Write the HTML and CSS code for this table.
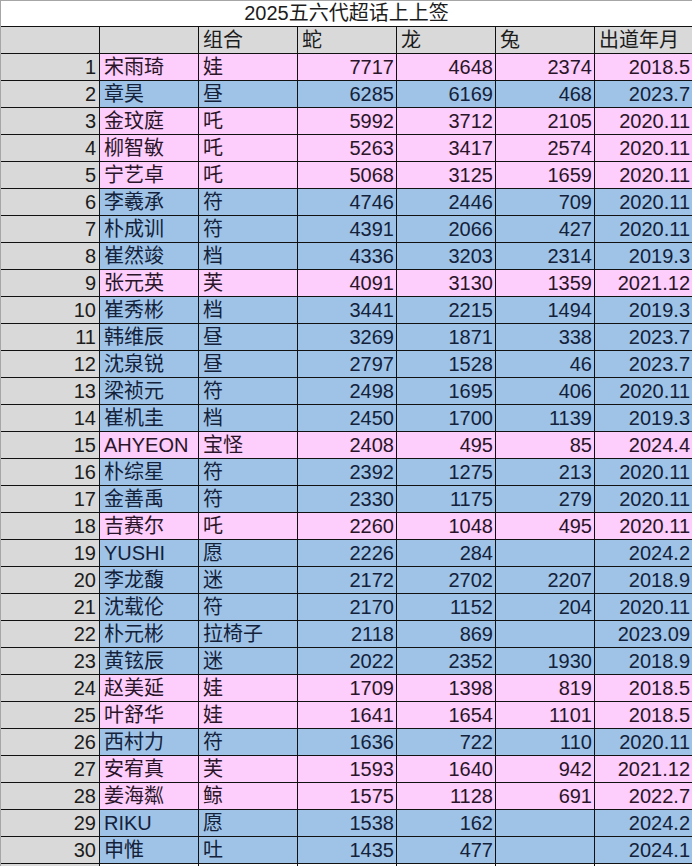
FILE: index.html
```html
<!DOCTYPE html>
<html lang="zh">
<head>
<meta charset="utf-8">
<title>2025五六代超话上上签</title>
<link rel="stylesheet" href="styles.css">
</head>
<body>
<div class="sheet">
  <div class="title">2025五六代超话上上签</div>

  <div class="c idx hd"></div><div class="c hd"></div><div class="c hd">组合</div><div class="c hd">蛇</div><div class="c hd">龙</div><div class="c hd">兔</div><div class="c hd last">出道年月</div>

  <div class="c idx">1</div><div class="c pink">宋雨琦</div><div class="c pink">娃</div><div class="c pink num">7717</div><div class="c pink num">4648</div><div class="c pink num">2374</div><div class="c pink num last">2018.5</div>
  <div class="c idx">2</div><div class="c blue">章昊</div><div class="c blue">昼</div><div class="c blue num">6285</div><div class="c blue num">6169</div><div class="c blue num">468</div><div class="c blue num last">2023.7</div>
  <div class="c idx">3</div><div class="c pink">金玟庭</div><div class="c pink">吒</div><div class="c pink num">5992</div><div class="c pink num">3712</div><div class="c pink num">2105</div><div class="c pink num last">2020.11</div>
  <div class="c idx">4</div><div class="c pink">柳智敏</div><div class="c pink">吒</div><div class="c pink num">5263</div><div class="c pink num">3417</div><div class="c pink num">2574</div><div class="c pink num last">2020.11</div>
  <div class="c idx">5</div><div class="c pink">宁艺卓</div><div class="c pink">吒</div><div class="c pink num">5068</div><div class="c pink num">3125</div><div class="c pink num">1659</div><div class="c pink num last">2020.11</div>
  <div class="c idx">6</div><div class="c blue">李羲承</div><div class="c blue">符</div><div class="c blue num">4746</div><div class="c blue num">2446</div><div class="c blue num">709</div><div class="c blue num last">2020.11</div>
  <div class="c idx">7</div><div class="c blue">朴成训</div><div class="c blue">符</div><div class="c blue num">4391</div><div class="c blue num">2066</div><div class="c blue num">427</div><div class="c blue num last">2020.11</div>
  <div class="c idx">8</div><div class="c blue">崔然竣</div><div class="c blue">档</div><div class="c blue num">4336</div><div class="c blue num">3203</div><div class="c blue num">2314</div><div class="c blue num last">2019.3</div>
  <div class="c idx">9</div><div class="c pink">张元英</div><div class="c pink">芙</div><div class="c pink num">4091</div><div class="c pink num">3130</div><div class="c pink num">1359</div><div class="c pink num last">2021.12</div>
  <div class="c idx">10</div><div class="c blue">崔秀彬</div><div class="c blue">档</div><div class="c blue num">3441</div><div class="c blue num">2215</div><div class="c blue num">1494</div><div class="c blue num last">2019.3</div>
  <div class="c idx">11</div><div class="c blue">韩维辰</div><div class="c blue">昼</div><div class="c blue num">3269</div><div class="c blue num">1871</div><div class="c blue num">338</div><div class="c blue num last">2023.7</div>
  <div class="c idx">12</div><div class="c blue">沈泉锐</div><div class="c blue">昼</div><div class="c blue num">2797</div><div class="c blue num">1528</div><div class="c blue num">46</div><div class="c blue num last">2023.7</div>
  <div class="c idx">13</div><div class="c blue">梁祯元</div><div class="c blue">符</div><div class="c blue num">2498</div><div class="c blue num">1695</div><div class="c blue num">406</div><div class="c blue num last">2020.11</div>
  <div class="c idx">14</div><div class="c blue">崔机圭</div><div class="c blue">档</div><div class="c blue num">2450</div><div class="c blue num">1700</div><div class="c blue num">1139</div><div class="c blue num last">2019.3</div>
  <div class="c idx">15</div><div class="c pink">AHYEON</div><div class="c pink">宝怪</div><div class="c pink num">2408</div><div class="c pink num">495</div><div class="c pink num">85</div><div class="c pink num last">2024.4</div>
  <div class="c idx">16</div><div class="c blue">朴综星</div><div class="c blue">符</div><div class="c blue num">2392</div><div class="c blue num">1275</div><div class="c blue num">213</div><div class="c blue num last">2020.11</div>
  <div class="c idx">17</div><div class="c blue">金善禹</div><div class="c blue">符</div><div class="c blue num">2330</div><div class="c blue num">1175</div><div class="c blue num">279</div><div class="c blue num last">2020.11</div>
  <div class="c idx">18</div><div class="c pink">吉赛尔</div><div class="c pink">吒</div><div class="c pink num">2260</div><div class="c pink num">1048</div><div class="c pink num">495</div><div class="c pink num last">2020.11</div>
  <div class="c idx">19</div><div class="c blue">YUSHI</div><div class="c blue">愿</div><div class="c blue num">2226</div><div class="c blue num">284</div><div class="c blue num"></div><div class="c blue num last">2024.2</div>
  <div class="c idx">20</div><div class="c blue">李龙馥</div><div class="c blue">迷</div><div class="c blue num">2172</div><div class="c blue num">2702</div><div class="c blue num">2207</div><div class="c blue num last">2018.9</div>
  <div class="c idx">21</div><div class="c blue">沈载伦</div><div class="c blue">符</div><div class="c blue num">2170</div><div class="c blue num">1152</div><div class="c blue num">204</div><div class="c blue num last">2020.11</div>
  <div class="c idx">22</div><div class="c blue">朴元彬</div><div class="c blue">拉椅子</div><div class="c blue num">2118</div><div class="c blue num">869</div><div class="c blue num"></div><div class="c blue num last">2023.09</div>
  <div class="c idx">23</div><div class="c blue">黄铉辰</div><div class="c blue">迷</div><div class="c blue num">2022</div><div class="c blue num">2352</div><div class="c blue num">1930</div><div class="c blue num last">2018.9</div>
  <div class="c idx">24</div><div class="c pink">赵美延</div><div class="c pink">娃</div><div class="c pink num">1709</div><div class="c pink num">1398</div><div class="c pink num">819</div><div class="c pink num last">2018.5</div>
  <div class="c idx">25</div><div class="c pink">叶舒华</div><div class="c pink">娃</div><div class="c pink num">1641</div><div class="c pink num">1654</div><div class="c pink num">1101</div><div class="c pink num last">2018.5</div>
  <div class="c idx">26</div><div class="c blue">西村力</div><div class="c blue">符</div><div class="c blue num">1636</div><div class="c blue num">722</div><div class="c blue num">110</div><div class="c blue num last">2020.11</div>
  <div class="c idx">27</div><div class="c pink">安宥真</div><div class="c pink">芙</div><div class="c pink num">1593</div><div class="c pink num">1640</div><div class="c pink num">942</div><div class="c pink num last">2021.12</div>
  <div class="c idx">28</div><div class="c pink">姜海粼</div><div class="c pink">鲸</div><div class="c pink num">1575</div><div class="c pink num">1128</div><div class="c pink num">691</div><div class="c pink num last">2022.7</div>
  <div class="c idx">29</div><div class="c blue">RIKU</div><div class="c blue">愿</div><div class="c blue num">1538</div><div class="c blue num">162</div><div class="c blue num"></div><div class="c blue num last">2024.2</div>
  <div class="c idx">30</div><div class="c blue">申惟</div><div class="c blue">吐</div><div class="c blue num">1435</div><div class="c blue num">477</div><div class="c blue num"></div><div class="c blue num last">2024.1</div>

  <div class="c idx"></div><div class="c"></div><div class="c"></div><div class="c"></div><div class="c"></div><div class="c"></div><div class="c last"></div>
</div>
</body>
</html>
```

FILE: styles.css
```css
html, body {
  margin: 0;
  padding: 0;
  background: #ffffff;
}

.sheet {
  width: 692px;
  height: 866px;
  overflow: hidden;
  box-sizing: border-box;
  border-top: 1px solid #a6a6a6;
  border-left: 1px solid #a6a6a6;
  display: grid;
  grid-template-columns: 99px 99px 99px 99px 99px 99px 97px;
  grid-auto-rows: 27px;
  grid-template-rows: 26px;
  font-family: "Liberation Sans", "Noto Sans CJK SC", sans-serif;
  font-size: 20px;
  color: #1c1c1c;
}

.title {
  grid-column: 1 / -1;
  text-align: center;
  line-height: 25px;
  border-bottom: 1px solid #111;
  background: #fff;
  white-space: nowrap;
}

.c {
  box-sizing: border-box;
  border-right: 1px solid #111;
  border-bottom: 1px solid #111;
  padding: 1px 4px 0 4px;
  line-height: 25px;
  white-space: nowrap;
  overflow: hidden;
}

.c.last {
  border-right: none;
}

.idx {
  background: #d9d9d9;
  text-align: right;
  padding-right: 3px;
}

.hd {
  background: #d9d9d9;
}

.num {
  text-align: right;
  padding-right: 2px;
}

.pink {
  background: #fdcdfb;
  color: #2a1429;
}

.blue {
  background: #9ec3e6;
  color: #13213a;
}
```
